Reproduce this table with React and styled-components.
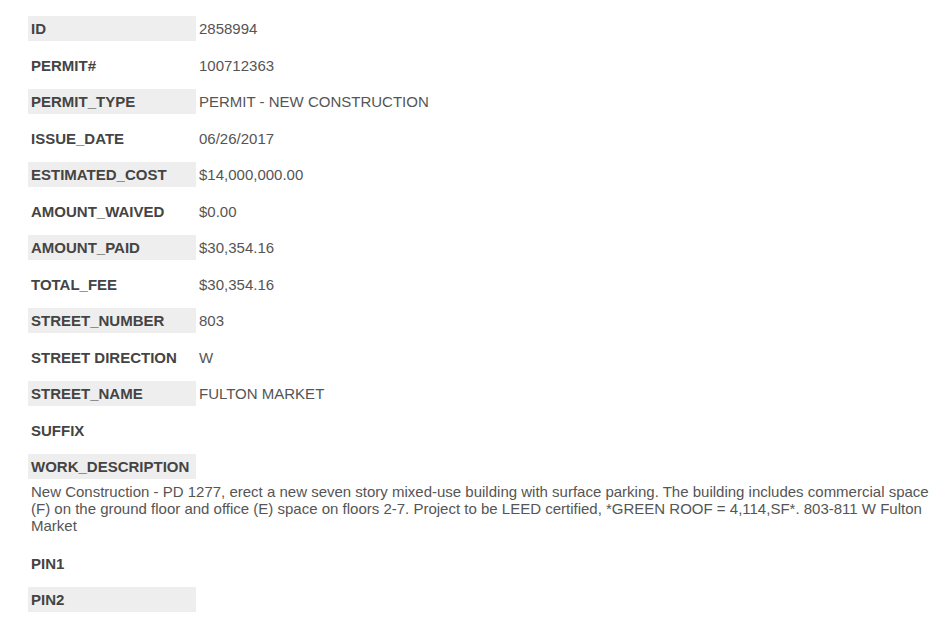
import React from 'react';
import styled, { createGlobalStyle } from 'styled-components';

const GlobalStyle = createGlobalStyle`
  body {
    margin: 0;
    background: #fff;
    font-family: "Liberation Sans", Arial, sans-serif;
  }
`

const fields = [
  ['ID', '2858994'],
  ['PERMIT#', '100712363'],
  ['PERMIT_TYPE', 'PERMIT - NEW CONSTRUCTION'],
  ['ISSUE_DATE', '06/26/2017'],
  ['ESTIMATED_COST', '$14,000,000.00'],
  ['AMOUNT_WAIVED', '$0.00'],
  ['AMOUNT_PAID', '$30,354.16'],
  ['TOTAL_FEE', '$30,354.16'],
  ['STREET_NUMBER', '803'],
  ['STREET DIRECTION', 'W'],
  ['STREET_NAME', 'FULTON MARKET'],
  ['SUFFIX', ''],
]

const description = 'New Construction - PD 1277, erect a new seven story mixed-use building with surface parking. The building includes commercial space (F) on the ground floor and office (E) space on floors 2-7. Project to be LEED certified, *GREEN ROOF = 4,114,SF*. 803-811 W Fulton Market'

export default function App() {
  return (
    <>
      <GlobalStyle />
      <Page>
        {fields.map(([label, value], i) => (
          <Row key={label}>
            <Label shaded={i % 2 === 0}>{label}</Label>
            <Value>{value}</Value>
          </Row>
        ))}
        <Block>
          <Label shaded>WORK_DESCRIPTION</Label>
          <Description>{description}</Description>
        </Block>
        <Row>
          <Label>PIN1</Label>
        </Row>
        <Row>
          <Label shaded>PIN2</Label>
        </Row>
      </Page>
    </>
  )
}

const Page = styled.div`
  display: flex;
  flex-direction: column;
  gap: 11.5px;
  padding: 16px 4px 0 28px;
  font-size: 15px;
`

const Row = styled.div`
  display: flex;
  align-items: center;
  height: 25px;
`

const Label = styled.div`
  box-sizing: border-box;
  width: 168px;
  height: 25px;
  line-height: 25px;
  padding: 0 3px;
  flex-shrink: 0;
  font-weight: bold;
  color: #444;
  background: ${props => (props.shaded ? '#eeeeee' : 'transparent')};
`

const Value = styled.div`
  padding-left: 3px;
  color: #555;
`

const Block = styled.div`
  display: flex;
  flex-direction: column;
  margin-bottom: 5px;
`

const Description = styled.p`
  margin: 4px 0 0 3px;
  line-height: 17px;
  color: #555;
`
